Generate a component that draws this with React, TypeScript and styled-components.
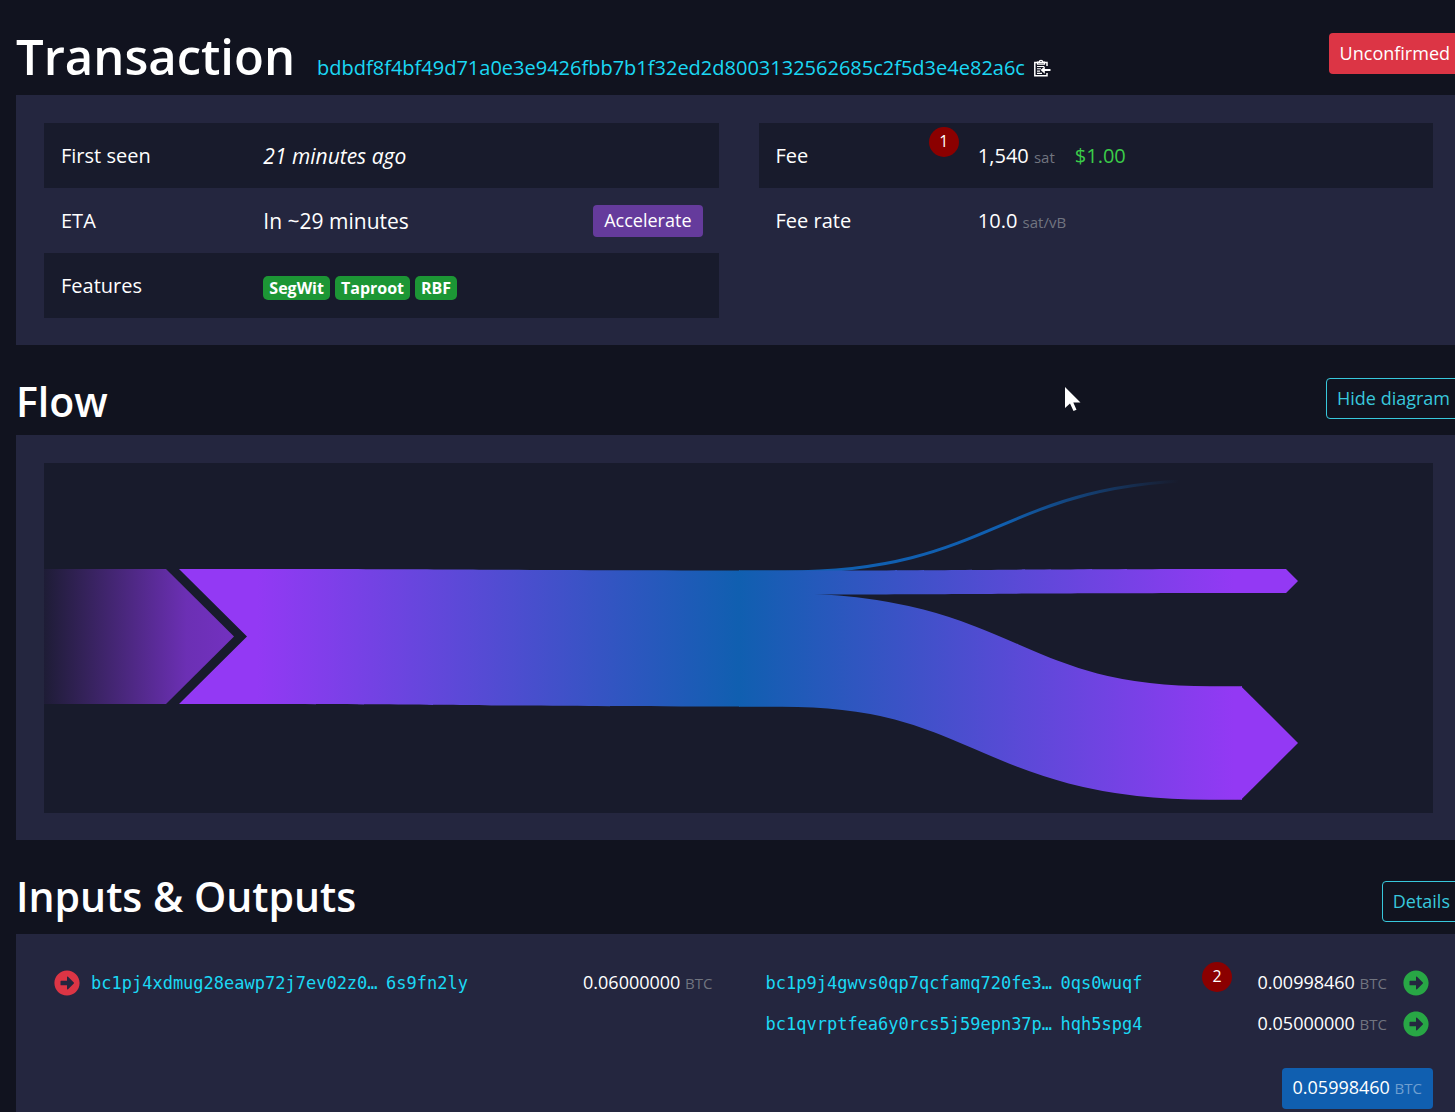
import React from "react";
import styled, { createGlobalStyle, css } from "styled-components";
import { FaArrowAltCircleRight } from "react-icons/fa";

const color = {
  page: "#11131f",
  panel: "#24263f",
  inset: "#181b2c",
  link: "#1bd8f4",
  outline: "#38c8dc",
  muted: "#71747f",
  purple: "#9339f4",
  blue: "#105fb0",
};

const GlobalStyle = createGlobalStyle`
  *, *::before, *::after { box-sizing: border-box; }
  body {
    margin: 0;
    background: ${color.page};
    color: #fff;
    font: 20px/32px "Open Sans", "Noto Sans", sans-serif;
    overflow-x: hidden;
  }
  a { color: ${color.link}; text-decoration: none; }
`;

const Page = styled.main`
  position: relative;
  min-height: 100vh;
  padding-left: 16px;
  margin-right: -6px;
  display: flex;
  flex-direction: column;
`;

const SectionHeader = styled.header<{ $height: number; $bottom: number }>`
  display: flex;
  justify-content: space-between;
  align-items: flex-start;
  height: ${(p) => p.$height}px;
  padding: 33px 0 ${(p) => p.$bottom}px;
`;

const TitleGroup = styled.div`
  display: flex;
  align-items: baseline;
  gap: 22px;
  height: 41px;
`;

const Title = styled.h1`
  margin: 0;
  font-size: 49px;
  line-height: 46px;
  font-weight: 600;
`;

const Subtitle = styled.h2`
  margin: 0;
  height: 41px;
  font-size: 41px;
  line-height: 46px;
  font-weight: 600;
`;

const TxId = styled.span`
  display: flex;
  align-items: center;
  gap: 8px;
`;

const CopyButton = styled.button`
  display: flex;
  padding: 0;
  border: 0;
  background: none;
  color: #fff;
`;

const buttonBase = css`
  border: 1px solid transparent;
  border-radius: 4px;
  padding: 0 10px 2px;
  color: #fff;
  font: inherit;
  font-size: 18px;
  line-height: 28px;
  white-space: nowrap;
`;

const StatusButton = styled.button`
  ${buttonBase}
  height: 41px;
  background: #dc3545;
`;

const OutlineButton = styled.button`
  ${buttonBase}
  align-self: flex-end;
  height: 41px;
  border-color: ${color.outline};
  background: transparent;
  color: ${color.outline};
`;

const AccelerateButton = styled.button`
  ${buttonBase}
  height: 32px;
  background: #653b9c;
`;

const Panel = styled.section<{ $grow?: boolean }>`
  padding: 28px;
  padding-bottom: 27px;
  background: ${color.panel};
  flex-grow: ${(p) => (p.$grow ? 1 : 0)};
`;

const Columns = styled.div`
  display: grid;
  grid-template-columns: 1fr 1fr;
  align-items: start;
  gap: 40px;
`;

const DetailTable = styled.table`
  width: 100%;
  border-collapse: collapse;
  table-layout: fixed;

  tr:nth-child(odd) {
    background: ${color.inset};
  }
  th,
  td {
    height: 65px;
    padding: 1px 16px 0 17px;
    font-weight: 400;
    text-align: left;
  }
  th {
    width: 30%;
  }
  td {
    position: relative;
  }
`;

const Duration = styled.span`
  font-size: 21px;
`;

const Spread = styled.div`
  display: flex;
  justify-content: space-between;
  align-items: center;
`;

const Tags = styled.div`
  display: flex;
  gap: 5px;
  padding-top: 4px;
`;

const Tag = styled.span`
  height: 24px;
  padding: 0 6px;
  border-radius: 5px;
  background: #1c9635;
  font-size: 16px;
  line-height: 24px;
  font-weight: 700;
`;

const Unit = styled.span`
  font-size: 15px;
  color: ${color.muted};
`;

const Fiat = styled.span`
  margin-left: 20px;
  color: #3bcc49;
`;

const Marker = styled.span<{ $left: number; $top: number }>`
  position: absolute;
  left: ${(p) => p.$left}px;
  top: ${(p) => p.$top}px;
  width: 30px;
  height: 30px;
  border-radius: 50%;
  background: #8b0000;
  font-size: 16px;
  line-height: 29px;
  text-align: center;
`;

const Diagram = styled.svg`
  display: block;
  width: 100%;
  height: auto;
  background: ${color.inset};
`;

const CoinTable = styled.table`
  width: 100%;
  border-collapse: collapse;

  td {
    position: relative;
    height: 41px;
    padding: 0;
    font-size: 18px;
    line-height: 32px;
    white-space: nowrap;
  }
`;

const IconCell = styled.td<{ $tone: string; $end?: boolean }>`
  width: ${(p) => (p.$end ? 42 : 37)}px;
  color: ${(p) => p.$tone};

  svg {
    display: block;
    width: 26px;
    height: 26px;
    margin: 1px 0 0 ${(p) => (p.$end ? 16 : 0)}px;
  }
`;

const AmountCell = styled.td`
  width: 140px;
  text-align: right;
`;

const CoinList = styled.div<{ $left: number; $right: number }>`
  padding: 0 ${(p) => p.$right}px 0 ${(p) => p.$left}px;
`;

const Address = styled.a`
  display: flex;
  font-family: "DejaVu Sans Mono", "Liberation Mono", monospace;
  font-size: 17px;
`;

const AddressHead = styled.span`
  width: 295px;
`;

const TotalRow = styled.div`
  display: flex;
  justify-content: flex-end;
  padding-top: 24px;
`;

const TotalButton = styled.button`
  ${buttonBase}
  height: 41px;
  background: ${color.blue};

  ${Unit} {
    color: #6f9fd0;
  }
`;

const Pointer = styled.svg`
  position: absolute;
  left: 1064px;
  top: 386px;
  pointer-events: none;
`;

function ClipboardIcon() {
  return (
    <svg width="18" height="18" viewBox="0 0 18 18" fill="none" stroke="currentColor" aria-hidden="true">
      <path d="M14 7V3.5H1.8V16.8H14V14" strokeWidth="1.5" />
      <path d="M4.5 5.2V3H6.3a1.7 1.7 0 0 1 3.4 0h1.8v2.2z" strokeWidth="1.2" />
      <path d="M4 7.5h7M4 9.8h4M4 12.1h3M4 14.4h5" strokeWidth="1.1" />
      <path d="M17.5 11H10" strokeWidth="2" />
      <path d="M11.8 7.2L7.6 11l4.2 3.8z" fill="currentColor" stroke="none" />
    </svg>
  );
}

function FlowDiagram() {
  return (
    <Diagram viewBox="0 0 1389 350" role="img" aria-label="Transaction flow">
      <defs>
        <linearGradient id="prev" gradientUnits="userSpaceOnUse" x1="0" y1="0" x2="190" y2="0">
          <stop offset="0" stopColor={color.purple} stopOpacity="0.05" />
          <stop offset="0.75" stopColor={color.purple} stopOpacity="0.68" />
          <stop offset="1" stopColor={color.purple} stopOpacity="0.74" />
        </linearGradient>
        <linearGradient id="input" gradientUnits="userSpaceOnUse" x1="203" y1="0" x2="695" y2="0">
          <stop offset="0" stopColor={color.purple} />
          <stop offset="0.02" stopColor={color.purple} />
          <stop offset="1" stopColor={color.blue} />
        </linearGradient>
        <linearGradient id="output" gradientUnits="userSpaceOnUse" x1="695" y1="0" x2="1190" y2="0">
          <stop offset="0" stopColor={color.blue} />
          <stop offset="1" stopColor={color.purple} />
        </linearGradient>
        <linearGradient id="fee" gradientUnits="userSpaceOnUse" x1="695" y1="0" x2="1135" y2="0">
          <stop offset="0" stopColor={color.blue} />
          <stop offset="0.6" stopColor={color.blue} />
          <stop offset="1" stopColor={color.blue} stopOpacity="0" />
        </linearGradient>
      </defs>
      <path d="M0 106H122L190 173.5 122 241H0z" fill="url(#prev)" />
      <path d="M135 106H203C450 106 450 107.5 696 107.5V243.5C450 243.5 450 241.5 203 241H135L203 173.5z" fill="url(#input)" />
      <path d="M695 109H741C955 109 955 17 1174 17" fill="none" stroke="url(#fee)" strokeWidth="3" />
      <path d="M695 107.5C950 107.5 950 106 1242 106L1254 118 1242 130C950 130 950 131.5 695 131.5z" fill="url(#output)" />
      <path d="M695 187H738C952 187 952 280 1166 280H1198" fill="none" stroke="url(#output)" strokeWidth="113.5" />
      <path d="M1197 223.2L1254 280 1197 336.8z" fill={color.purple} />
    </Diagram>
  );
}

function Coin({ head, tail }: { head: string; tail: string }) {
  return (
    <Address href="#address">
      <AddressHead>{head}…</AddressHead>
      <span>{tail}</span>
    </Address>
  );
}

const outputs = [
  { head: "bc1p9j4gwvs0qp7qcfamq720fe3", tail: "0qs0wuqf", amount: "0.00998460", marker: "2" },
  { head: "bc1qvrptfea6y0rcs5j59epn37p", tail: "hqh5spg4", amount: "0.05000000" },
];

export default function App() {
  return (
    <>
      <GlobalStyle />
      <Page>
        <SectionHeader $height={95} $bottom={21}>
          <TitleGroup>
            <Title>Transaction</Title>
            <TxId>
              <a href="#tx">bdbdf8f4bf49d71a0e3e9426fbb7b1f32ed2d8003132562685c2f5d3e4e82a6c</a>
              <CopyButton aria-label="Copy transaction ID">
                <ClipboardIcon />
              </CopyButton>
            </TxId>
          </TitleGroup>
          <StatusButton>Unconfirmed</StatusButton>
        </SectionHeader>
        <Panel>
          <Columns>
            <DetailTable>
              <tbody>
                <tr>
                  <th scope="row">First seen</th>
                  <td>
                    <Duration as="i">21 minutes ago</Duration>
                  </td>
                </tr>
                <tr>
                  <th scope="row">ETA</th>
                  <td>
                    <Spread>
                      <Duration>In ~29 minutes</Duration>
                      <AccelerateButton>Accelerate</AccelerateButton>
                    </Spread>
                  </td>
                </tr>
                <tr>
                  <th scope="row">Features</th>
                  <td>
                    <Tags>
                      <Tag>SegWit</Tag>
                      <Tag>Taproot</Tag>
                      <Tag>RBF</Tag>
                    </Tags>
                  </td>
                </tr>
              </tbody>
            </DetailTable>
            <DetailTable>
              <tbody>
                <tr>
                  <th scope="row">Fee</th>
                  <td>
                    <Marker $left={-32} $top={4}>1</Marker>
                    1,540 <Unit>sat</Unit>
                    <Fiat>$1.00</Fiat>
                  </td>
                </tr>
                <tr>
                  <th scope="row">Fee rate</th>
                  <td>
                    10.0 <Unit>sat/vB</Unit>
                  </td>
                </tr>
              </tbody>
            </DetailTable>
          </Columns>
        </Panel>

        <SectionHeader $height={90} $bottom={16}>
          <Subtitle>Flow</Subtitle>
          <OutlineButton>Hide diagram</OutlineButton>
        </SectionHeader>
        <Panel>
          <FlowDiagram />
        </Panel>

        <SectionHeader $height={94} $bottom={12}>
          <Subtitle>Inputs &amp; Outputs</Subtitle>
          <OutlineButton>Details</OutlineButton>
        </SectionHeader>
        <Panel $grow>
          <Columns>
            <CoinList $left={10} $right={6}>
              <CoinTable>
                <tbody>
                  <tr>
                    <IconCell $tone="#dc3545"><FaArrowAltCircleRight /></IconCell>
                    <td><Coin head="bc1pj4xdmug28eawp72j7ev02z0" tail="6s9fn2ly" /></td>
                    <AmountCell>0.06000000 <Unit>BTC</Unit></AmountCell>
                  </tr>
                </tbody>
              </CoinTable>
            </CoinList>
            <CoinList $left={7} $right={4}>
              <CoinTable>
                <tbody>
                  {outputs.map((o) => (
                    <tr key={o.tail}>
                      <td><Coin head={o.head} tail={o.tail} /></td>
                      <AmountCell>
                        {o.marker && <Marker $left={-45} $top={0}>{o.marker}</Marker>}
                        {o.amount} <Unit>BTC</Unit>
                      </AmountCell>
                      <IconCell $tone="#28a745" $end><FaArrowAltCircleRight /></IconCell>
                    </tr>
                  ))}
                </tbody>
              </CoinTable>
            </CoinList>
          </Columns>
          <TotalRow>
            <TotalButton>0.05998460 <Unit>BTC</Unit></TotalButton>
          </TotalRow>
        </Panel>

        <Pointer width="18" height="27" viewBox="0 0 18 27" aria-hidden="true">
          <path d="M1 1V22L6 17.5 9.5 25 12.5 23.8 9.3 16.5H16.5z" fill="#fff" />
        </Pointer>
      </Page>
    </>
  );
}
